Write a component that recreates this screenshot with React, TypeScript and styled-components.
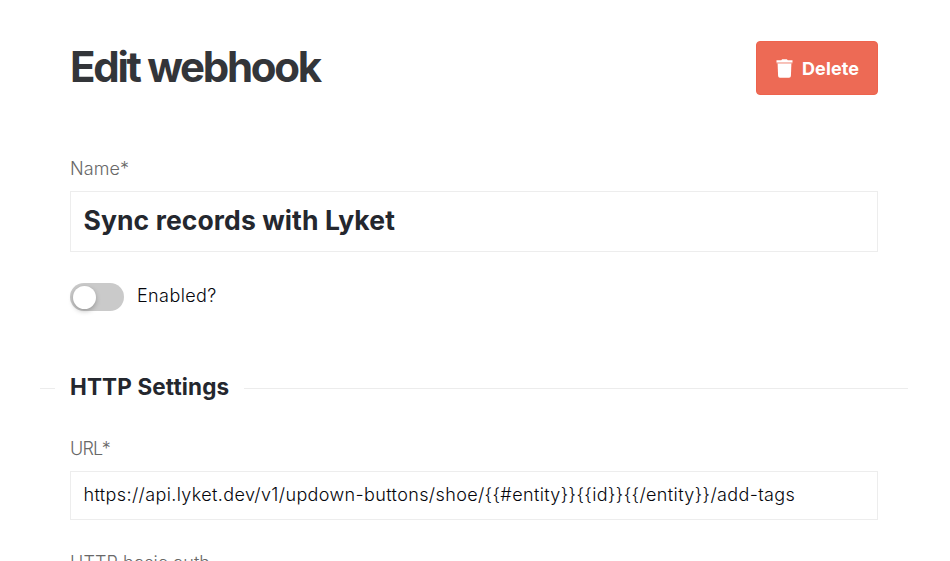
import React from "react";
import styled, { createGlobalStyle } from "styled-components";

const Global = createGlobalStyle`
  *{box-sizing:border-box}
  html,body{margin:0;height:561px;overflow:hidden;background:#fff}
  body{font-family:Inter,"Liberation Sans",sans-serif;color:#24272e}
`;
const Page = styled.main`
  width:950px;height:561px;overflow:hidden;padding:41px 72px 0 70px;
`;
const Header = styled.header`
  display:flex;justify-content:space-between;height:54px;
`;
const Text = styled.span<{ $w: number; $s: number; $ls?: number; $c?: string }>`
  display:block;white-space:pre;font-size:${p => p.$s}px;font-weight:${p => p.$w};letter-spacing:${p => p.$ls ?? 0}px;color:${p => p.$c ?? "inherit"};
`;
const Title = styled.h1`margin:0;line-height:51px;color:#333539;`;
const Delete = styled.button`
  width:122px;height:54px;border:1px solid #ee634d;border-radius:4px;background:#ed6a55;color:#fff;
  display:flex;align-items:center;padding:0 0 0 19px;gap:9px;font-family:inherit;
`;
const Label = styled.label<{ $top: number }>`
  display:block;margin-top:${p => p.$top}px;height:24px;line-height:24px;color:#686868;
`;
const Field = styled.div<{ $h: number; $pb: number }>`
  margin-top:10px;height:${p => p.$h}px;border:1px solid #ededed;padding:0 12.5px ${p => p.$pb}px 12.5px;
  display:flex;align-items:center;
`;
const ToggleRow = styled.div`display:flex;align-items:flex-start;gap:13px;height:28px;margin-top:31px;line-height:25px;`;
const Track = styled.span`width:54px;height:28px;border-radius:14px;background:#cacaca;padding:3px;`;
const Knob = styled.span`display:block;width:23px;height:23px;border-radius:50%;background:#fff;box-shadow:0 2px 5px rgba(0,0,0,.25);`;
const Section = styled.div`
  display:flex;align-items:center;margin:62px -30px 0;height:30px;
`;
const Line = styled.span<{ $w?: number }>`height:1px;background:#ececec;${p => p.$w ? `width:${p.$w}px` : "flex:1"};`;
const Heading = styled.h2`margin:0 15px;line-height:28px;padding-bottom:2px;`;

const TrashIcon = () => (
  <svg width="17" height="20" viewBox="0 0 17 20" fill="#fff">
    <path d="M0.5 2.2h4.7L6.2 1.2h4.6l1 1h4.7v2h-16z" />
    <path d="M0.5 4.2h16v1.2h-16z" opacity="0.55" />
    <path d="M1.6 5.4h13.8L14.9 18q-.1 1.7-1.8 1.7H3.9q-1.7 0-1.8-1.7z" />
  </svg>
);

export default function App() {
  return <><Global /><Page>
    <Header>
      <Title><Text $w={650} $s={42} $ls={-2.3}>Edit webhook</Text></Title>
      <Delete><TrashIcon /><Text $w={700} $s={18} $ls={0.1}>Delete</Text></Delete>
    </Header>
    <Label $top={62}><Text $w={350} $s={18} $ls={0.1}>Name*</Text></Label>
    <Field $h={61} $pb={3}><Text $w={700} $s={26.5} $ls={0.1}>Sync records with Lyket</Text></Field>
    <ToggleRow><Track><Knob /></Track><Text $w={350} $s={18} $ls={0.4} $c="#05060c">Enabled?</Text></ToggleRow>
    <Section><Line $w={15} /><Heading><Text $w={700} $s={22.5} $ls={0.14}>HTTP Settings</Text></Heading><Line /></Section>
    <Label $top={34}><Text $w={350} $s={18} $ls={-0.8}>URL*</Text></Label>
    <Field $h={49} $pb={2}><Text $w={350} $s={18} $ls={0.375} $c="#05060c">{"https://api.lyket.dev/v1/updown-buttons/shoe/{{#entity}}{{id}}{{/entity}}/add-tags"}</Text></Field>
    <Label $top={31}><Text $w={350} $s={18} $ls={0.1}>HTTP basic auth</Text></Label>
  </Page></>;
}
